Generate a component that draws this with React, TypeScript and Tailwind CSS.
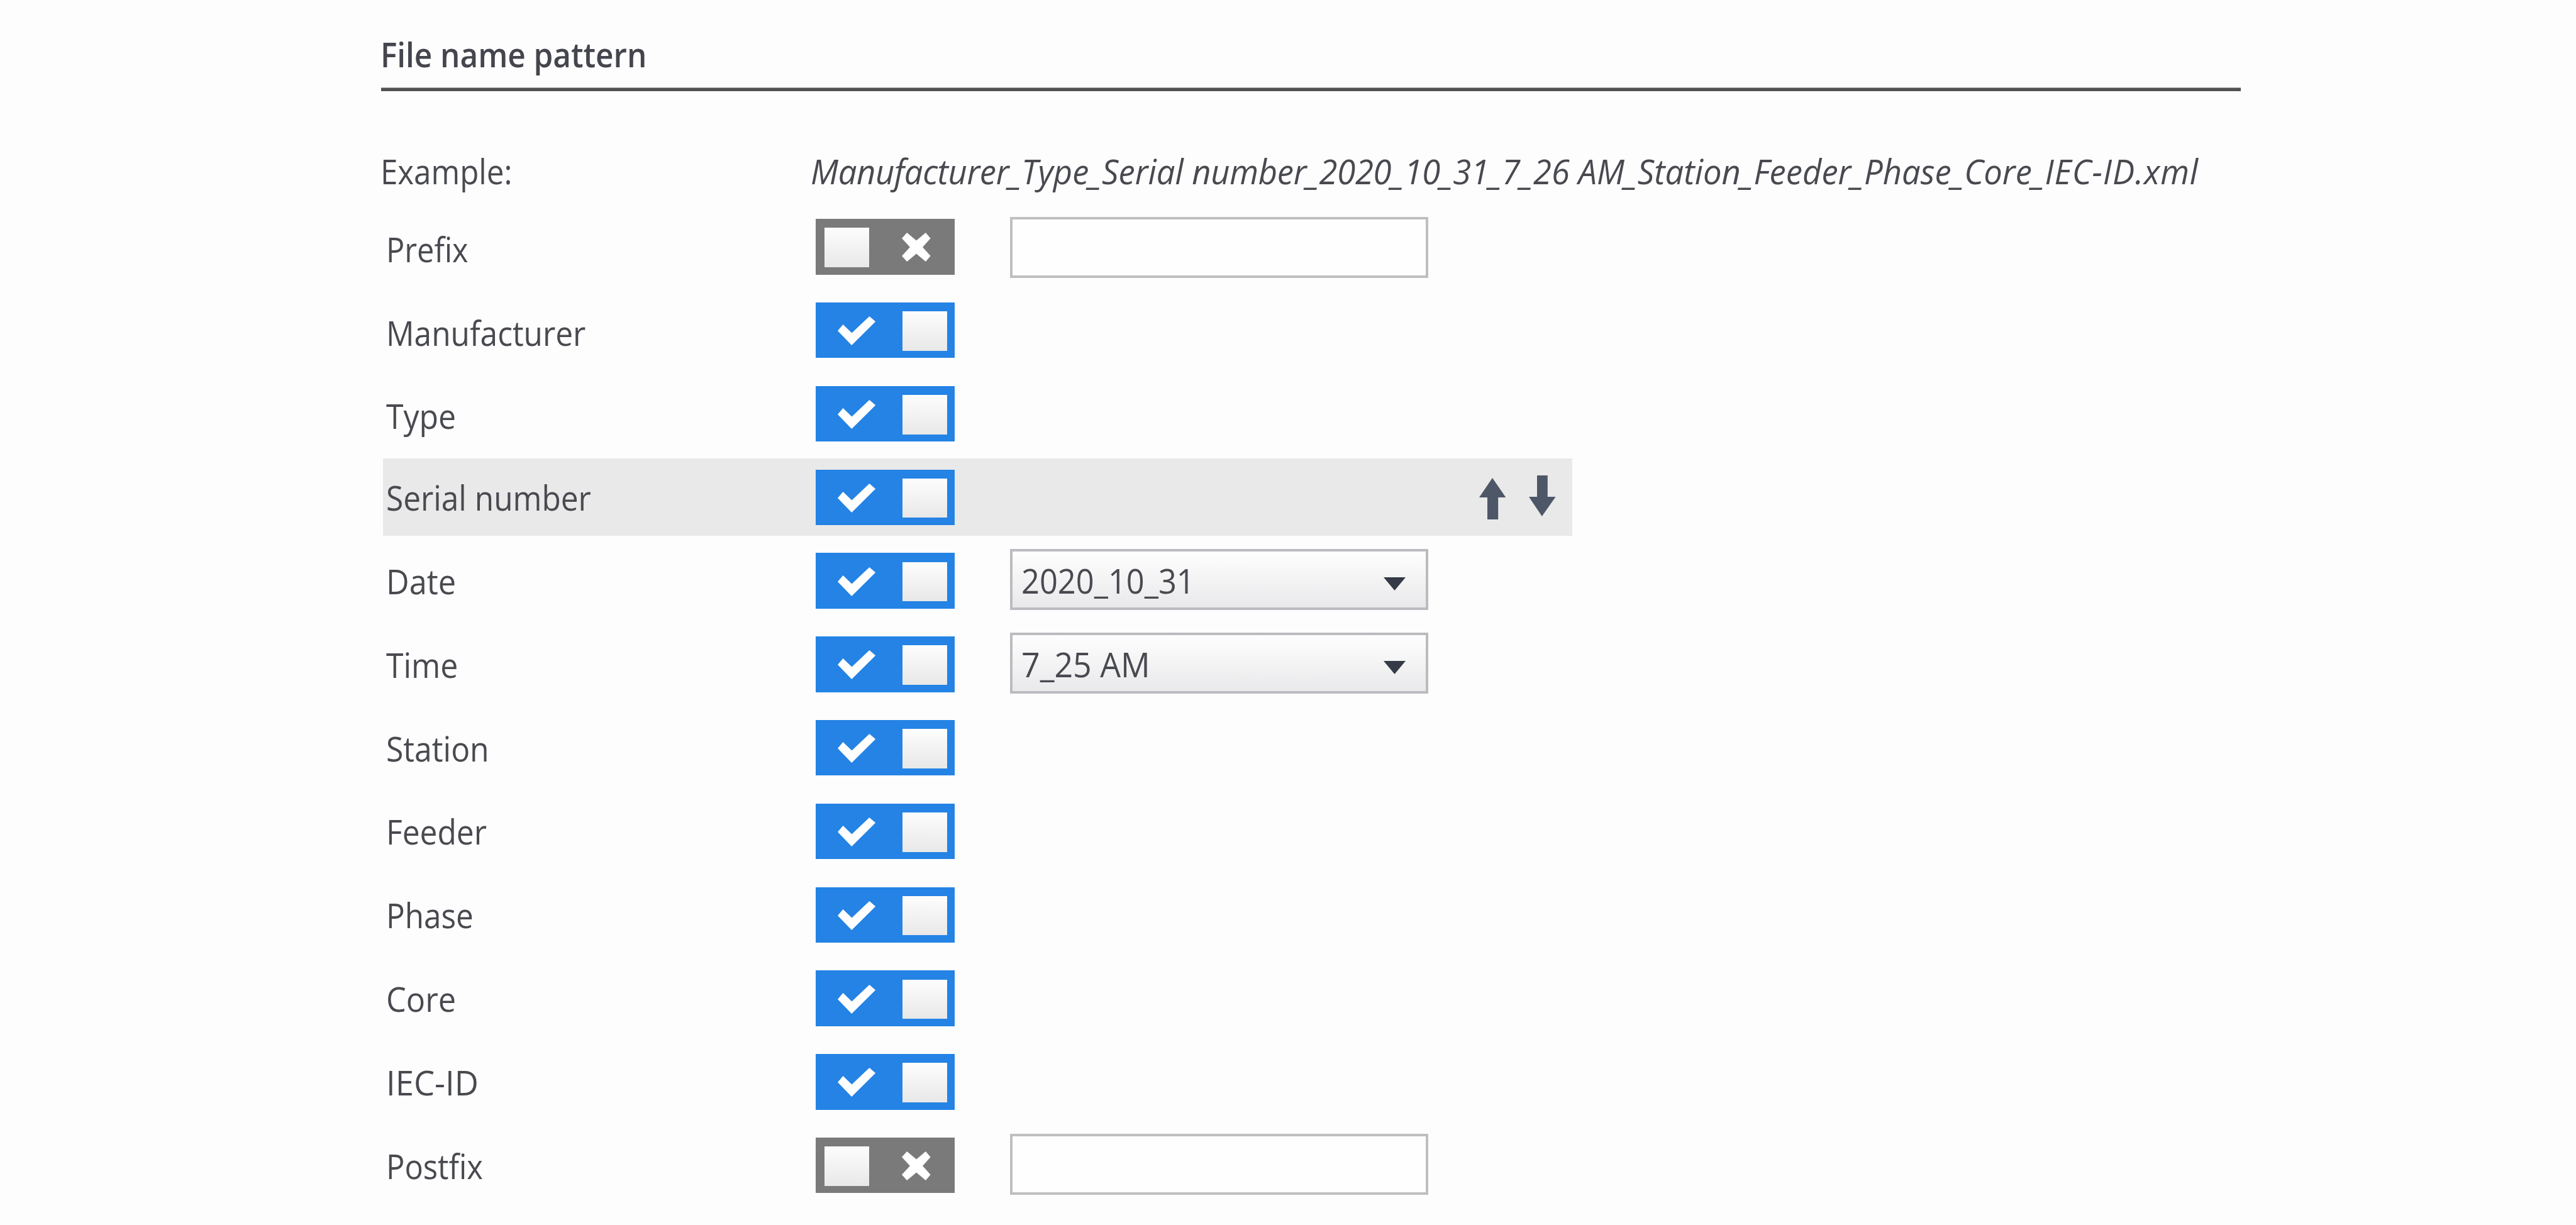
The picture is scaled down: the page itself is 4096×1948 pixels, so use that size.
type Row = {
  label: string;
  stretch: string;
  on: boolean;
  field?: "input" | "select";
  value?: string;
  valueStretch?: string;
  selected?: boolean;
};

const rows: Row[] = [
  { label: "Prefix", stretch: "scale-x-[0.9]", on: false, field: "input" },
  { label: "Manufacturer", stretch: "scale-x-[0.918]", on: true },
  { label: "Type", stretch: "scale-x-[0.925]", on: true },
  { label: "Serial number", stretch: "scale-x-[0.918]", on: true, selected: true },
  { label: "Date", stretch: "scale-x-[0.935]", on: true, field: "select", value: "2020_10_31", valueStretch: "scale-x-[0.937]" },
  { label: "Time", stretch: "scale-x-[0.925]", on: true, field: "select", value: "7_25 AM", valueStretch: "scale-x-[0.961]" },
  { label: "Station", stretch: "scale-x-[0.923]", on: true },
  { label: "Feeder", stretch: "scale-x-[0.92]", on: true },
  { label: "Phase", stretch: "scale-x-[0.915]", on: true },
  { label: "Core", stretch: "scale-x-[0.935]", on: true },
  { label: "IEC-ID", stretch: "scale-x-[0.975]", on: true },
  { label: "Postfix", stretch: "scale-x-[0.905]", on: false, field: "input" },
];

function Toggle({ on }: { on: boolean }) {
  const knob = <span className="h-[62.5px] w-[71px] bg-linear-to-b from-[#fdfdfd] to-[#e8e8e8]" />;
  return on ? (
    <button className="flex h-[88.4px] w-[221px] shrink-0 items-start bg-[#2483e4] pt-[14.3px] pr-[11.8px] pl-[35px]">
      <svg className="mt-[8px] h-[46px] w-[60.2px]" viewBox="0 0 60.2 46" fill="#fff">
        <path d="M0 22.9 L8.5 12.9 L22.4 26.5 L50.4 0 L60.2 8.4 L22.2 46 Z" />
      </svg>
      <span className="ml-auto flex">{knob}</span>
    </button>
  ) : (
    <button className="flex h-[88.4px] w-[221px] shrink-0 items-start bg-[#7a7a7a] pt-[14.2px] pr-[38px] pl-[14.2px]">
      {knob}
      <svg className="mt-[7.8px] ml-auto h-[46px] w-[45.6px]" viewBox="0 0 45.6 46" fill="#fff">
        <path d="M0 9 L8.1 0 L23.1 12.6 L37.9 0 L45.6 9 L33.1 22.9 L45.6 37 L37.9 46 L23.1 33.4 L8.1 46 L0 37 L12.9 22.9 Z" />
      </svg>
    </button>
  );
}

function MoveArrows() {
  return (
    <div className="ml-auto flex h-full items-center gap-[37px] pr-[26px]">
      <svg className="mt-[5px] h-[66px] w-[42.4px]" viewBox="0 0 42.4 66" fill="#4e5768">
        <path d="M21 0 L42.4 31 H30.2 V66 H13 V31 H0 Z" />
      </svg>
      <svg className="mb-[5px] h-[65px] w-[42.6px]" viewBox="0 0 42.6 65" fill="#4e5768">
        <path d="M13 0 H29.8 V34 H42.6 L20.8 65 L0 34 H13 Z" />
      </svg>
    </div>
  );
}

function Field({ row, first }: { row: Row; first: boolean }) {
  if (row.field === "input") {
    return (
      <div
        className={`ml-[88px] h-[97px] w-[664.5px] shrink-0 border-4 border-[#bfbfc2] bg-[#fefefe] ${first ? "mt-[2.4px]" : "mb-[3.2px]"}`}
      />
    );
  }
  return (
    <div className="mb-[3.3px] ml-[88px] flex h-[97px] w-[664.5px] shrink-0 items-center border-4 border-[#bbbbc0] bg-linear-to-b from-[#fefefe] to-[#e9e9eb] pr-[32px] pl-[14px]">
      <span className={`mt-[3px] block origin-left leading-[74px] ${row.valueStretch}`}>{row.value}</span>
      <svg className="mt-[13px] ml-auto h-[21px] w-[35px]" viewBox="0 0 35 21" fill="#343b46">
        <path d="M0 0 H35 L17.5 21 Z" />
      </svg>
    </div>
  );
}

export default function App() {
  return (
    <div className="h-[1948px] w-[4096px] overflow-hidden bg-[#fdfdfd] pt-[49px] pl-[604px] font-['Open_Sans',sans-serif] text-[54px] leading-[74px] whitespace-nowrap text-[#494a50]">
      <h1 className="w-fit origin-left scale-x-[0.915] pl-px font-semibold text-[#44454d]">File name pattern</h1>
      <div className="mt-[16px] ml-[2px] h-[6px] w-[2957px] border-t border-[#a4a4a4] bg-[#525252]" />
      <div className="mt-[90px] flex h-[74px]">
        <div className="w-[685px] shrink-0">
          <span className="block w-fit origin-left scale-x-[0.913] pl-px">Example:</span>
        </div>
        <span className="block w-fit origin-left scale-x-[0.974] italic">
          <span className="tracking-[-0.4px]">Manufacturer_</span>Type_Serial
          <span className="tracking-[-0.3px]"> number_2020_10_31</span>_7_26 AM_Station_Feeder_Phase_Core_
          <span className="tracking-[0.9px]">IEC-ID.xml</span>
        </span>
      </div>
      <div className="mt-[17px] ml-[5px] w-[1891px]">
        {rows.map((row, i) => (
          <div key={row.label} className="h-[132.8px] py-[4.9px]">
            <div className={`flex h-full items-center ${row.selected ? "bg-[#e9e9e9]" : ""}`}>
              <div className={`w-[688px] shrink-0 pl-[4.5px] ${i < 3 ? "pt-[7px]" : "pt-[1px]"}`}>
                <span className={`block w-fit origin-left ${row.stretch}`}>{row.label}</span>
              </div>
              <Toggle on={row.on} />
              {row.field && <Field row={row} first={i === 0} />}
              {row.selected && <MoveArrows />}
            </div>
          </div>
        ))}
      </div>
    </div>
  );
}
